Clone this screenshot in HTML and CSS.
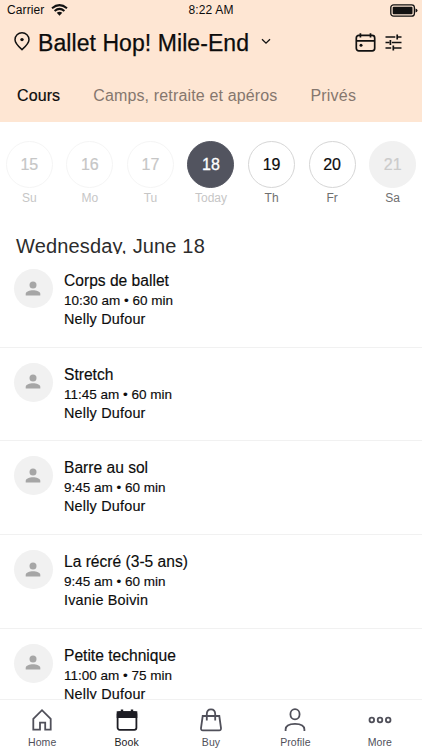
FILE: index.html
```html
<!DOCTYPE html>
<html lang="en">
<head>
<meta charset="utf-8">
<title>Ballet Hop! Mile-End</title>
<link rel="stylesheet" href="styles.css">
</head>
<body>
<svg class="defs" width="0" height="0">
  <symbol id="person" viewBox="0 0 16 16"><circle cx="8" cy="4.1" r="3.5"/><path d="M.7 14.6v-1.7C.7 10.4 4.6 9.2 8 9.2s7.300 1.200 7.300 3.700v1.700z"/></symbol>
</svg>
<div class="app">
  <header class="top">
    <div class="status">
      <div class="carrier"><span>Carrier</span>
        <svg width="17" height="12" viewBox="0 0 17 12" fill="none" stroke="#111" stroke-width="2"><path d="M1 4.300Q8.500-2.100 16 4.300M3.600 7Q8.500 2.700 13.400 7"/><path d="M5.700 8.800Q8.500 6.600 11.300 8.800L8.500 11.700z" fill="#111" stroke="none"/></svg>
      </div>
      <div class="time">8:22 AM</div>
      <svg class="battery" width="28" height="13" viewBox="0 0 28 13"><rect x=".8" y=".8" width="23.600" height="11.400" rx="2.800" fill="none" stroke="#111" stroke-width="1.300"/><rect x="2.700" y="2.700" width="19.800" height="7.600" rx="1" fill="#111"/><path d="M25.500 4.500q2 .4 2 2t-2 2z" fill="#111"/></svg>
    </div>
    <div class="title-row">
      <svg class="pin" width="16" height="19" viewBox="0 0 16 19" fill="none" stroke="#111" stroke-width="1.500"><path d="M8 17.600C5 14.900 1 11.400 1 7.700a7 6.900 0 0 1 14 0c0 3.700-4 7.200-7 9.900z" stroke-linejoin="round"/><circle cx="8" cy="7.600" r="1.700" fill="#111" stroke="none"/></svg>
      <h1>Ballet Hop! Mile-End</h1>
      <svg class="chevron" width="10" height="7" viewBox="0 0 10 7" fill="none" stroke="#111" stroke-width="1.300"><path d="M1 1.200l4 4 4-4"/></svg>
      <svg class="calendar" width="21" height="19" viewBox="0 0 21 19" fill="none" stroke="#111" stroke-width="1.700"><rect x="1.300" y="2.400" width="18.400" height="15.400" rx="2.500"/><path d="M1.300 7.900h18.400M5.400.3v4.200M15.500.3v4.200"/><circle cx="6" cy="12.200" r="1.500" fill="#111" stroke="none"/></svg>
      <svg class="filters" width="17" height="17" viewBox="0 0 17 17" fill="none" stroke="#111" stroke-width="1.700"><path d="M.5 3h9.800M12.200 3h4.300M12.200.5v5M.5 8.500h3.800M6.900 8.500h9.600M5.400 6v5M.5 14h5.700M8.200 14h8.300M8.300 11.500v5"/></svg>
    </div>
    <nav class="tabs"><span class="active">Cours</span><span class="camps">Camps, retraite et apéros</span><span class="prives">Privés</span></nav>
  </header>

  <section class="days">
    <div class="day past"><b>15</b><span>Su</span></div>
    <div class="day past"><b>16</b><span>Mo</span></div>
    <div class="day past"><b>17</b><span>Tu</span></div>
    <div class="day today"><b>18</b><span>Today</span></div>
    <div class="day"><b>19</b><span>Th</span></div>
    <div class="day"><b>20</b><span>Fr</span></div>
    <div class="day full"><b>21</b><span>Sa</span></div>
  </section>

  <h2>Wednesday, June 18</h2>

  <main class="list">
    <article><div class="avatar"><svg width="16" height="16"><use href="#person"/></svg></div><div class="info"><h3>Corps de ballet</h3><p class="when">10:30 am • 60 min</p><p class="who">Nelly Dufour</p></div></article>
    <article><div class="avatar"><svg width="16" height="16"><use href="#person"/></svg></div><div class="info"><h3>Stretch</h3><p class="when">11:45 am • 60 min</p><p class="who">Nelly Dufour</p></div></article>
    <article><div class="avatar"><svg width="16" height="16"><use href="#person"/></svg></div><div class="info"><h3>Barre au sol</h3><p class="when">9:45 am • 60 min</p><p class="who">Nelly Dufour</p></div></article>
    <article><div class="avatar"><svg width="16" height="16"><use href="#person"/></svg></div><div class="info"><h3>La récré (3-5 ans)</h3><p class="when">9:45 am • 60 min</p><p class="who">Ivanie Boivin</p></div></article>
    <article><div class="avatar"><svg width="16" height="16"><use href="#person"/></svg></div><div class="info"><h3>Petite technique</h3><p class="when">11:00 am • 75 min</p><p class="who">Nelly Dufour</p></div></article>
  </main>

  <footer class="tabbar">
    <div class="item"><svg width="24" height="24" viewBox="0 0 24 24"><path d="M3.300 21.600V10.800L12 2.200l8.700 8.600v10.800h-5.500v-7h-5.200v7z"/></svg><span>Home</span></div>
    <div class="item on"><svg width="24" height="24" viewBox="0 0 24 24"><rect x="2.600" y="4.200" width="18.800" height="17.600" rx="2"/><path d="M2.600 4.200h18.800v5H2.600z" fill="#1d1d24"/><path d="M7 1.600v3M17 1.600v3" stroke-width="2.400"/></svg><span>Book</span></div>
    <div class="item"><svg width="24" height="24" viewBox="0 0 24 24"><path d="M3.700 8h16.600l1.700 12q.2 2.300-1.800 2.300H3.800q-2 0-1.800-2.300zM7.800 12.500V6q0-4.700 4.200-4.700T16.200 6v6.500"/></svg><span>Buy</span></div>
    <div class="item"><svg width="24" height="24" viewBox="0 0 24 24"><ellipse cx="12" cy="6.300" rx="4.600" ry="5.100"/><path d="M2.600 23v-1.500c0-4 4-5.700 9.400-5.700s9.400 1.700 9.400 5.700V23"/></svg><span>Profile</span></div>
    <div class="item"><svg width="24" height="24" viewBox="0 0 24 24"><circle cx="3.800" cy="12" r="2.300"/><circle cx="12" cy="12" r="2.300"/><circle cx="20.200" cy="12" r="2.300"/></svg><span>More</span></div>
  </footer>
</div>
</body>
</html>
```
FILE: styles.css
```css
* { box-sizing: border-box; }
body { margin: 0; background: #fff; color: #0c0c0c; font-family: "Liberation Sans", Arial, sans-serif; }
h1, h2, h3, p { margin: 0; font-weight: 400; }
svg { display: block; flex: none; }
.defs { position: absolute; }
.app { width: 422px; height: 750px; display: flex; flex-direction: column; overflow: hidden; }

.top { height: 122px; flex: none; background: #fee6d3; }
.status { height: 20px; padding: 0 4px 0 7px; display: grid; grid-template-columns: 1fr auto 1fr; align-items: center; font-size: 12px; }
.carrier { display: flex; align-items: center; gap: 7px; letter-spacing: .1px; }
.time { margin-right: 3px; letter-spacing: .15px; }
.battery { justify-self: end; }
.title-row { height: 46px; padding: 0 20px 0 14px; display: flex; align-items: center; }
h1 { margin-left: 8px; font-size: 23px; line-height: 45px; letter-spacing: .07px; white-space: nowrap; -webkit-text-stroke: .25px #0c0c0c; }
.pin { margin-bottom: 4px; }
.chevron { margin: 0 0 3px 12px; }
.calendar { margin-left: auto; margin-bottom: 1px; }
.filters { margin-left: 9px; margin-bottom: 1px; }
.tabs { height: 56px; padding: 4px 16px 0 17px; display: flex; align-items: center; gap: 33px; font-size: 16px; color: #85776e; white-space: nowrap; }
.tabs .active { color: #0c0c0c; letter-spacing: .1px; -webkit-text-stroke: .2px #0c0c0c; }
.camps { letter-spacing: .15px; }
.prives { letter-spacing: .2px; }

.days { height: 111px; flex: none; margin: 0 -1px; padding-top: 19px; display: grid; grid-template-columns: repeat(7, 1fr); }
.day { display: flex; flex-direction: column; align-items: center; font-size: 12px; color: #6f6f6f; }
.day b { width: 47px; height: 47px; border: 1px solid #d6d6d6; border-radius: 50%; font-size: 16px; font-weight: 400; line-height: 46px; text-align: center; color: #0c0c0c; -webkit-text-stroke: .2px; }
.day span { margin-top: 3px; line-height: 15px; }
.day.past, .day.today { color: #c6c6c6; }
.day.past b { color: #c6c6c6; border-color: #f5f5f5; }
.day.today b { background: #52545f; border-color: #52545f; color: #fff; -webkit-text-stroke: .3px #fff; }
.day.full b { background: #f1f1f1; border-color: #f1f1f1; color: #cbcbcb; }

h2 { height: 21px; flex: none; padding-left: 16px; overflow: hidden; color: #2c2c2c; font-size: 20px; line-height: 27px; letter-spacing: .16px; }

.list { flex: 1; min-height: 0; overflow: hidden; }
article { height: 93.7px; padding: 15px 14px 0; display: flex; gap: 11px; border-bottom: 1px solid #f1f1f1; }
.avatar { width: 39px; height: 39px; margin-left: -.4px; margin-right: .4px; flex: none; display: grid; place-items: center; border-radius: 50%; background: #f1f1f1; }
.avatar svg { fill: #a6a6a6; }
.info { padding-top: 2px; white-space: nowrap; -webkit-text-stroke: .15px #0c0c0c; }
h3 { font-size: 15.6px; line-height: 20px; letter-spacing: 0; }
.when { font-size: 13.5px; line-height: 19px; letter-spacing: 0; }
.who { font-size: 14.4px; line-height: 19px; letter-spacing: .2px; }

.tabbar { height: 51px; flex: none; display: grid; grid-template-columns: repeat(5, 1fr); border-top: 1px solid #f1f1f1; background: #fff; }
.item { padding-top: 8px; display: flex; flex-direction: column; align-items: center; color: #50505a; font-size: 10.5px; }
.item svg { fill: none; stroke: #50505a; stroke-width: 1.8; }
.item span { margin-top: 4px; line-height: 13px; letter-spacing: .1px; }
.item.on { color: #1d1d24; }
.item.on svg { stroke: #1d1d24; }
```
